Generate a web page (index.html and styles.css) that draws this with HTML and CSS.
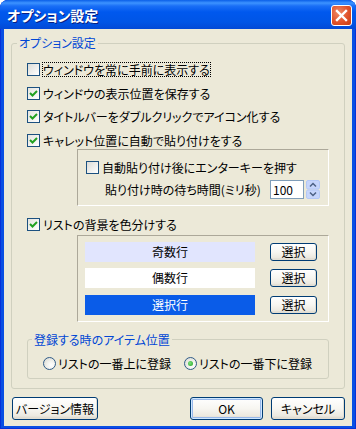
FILE: index.html
```html
<!DOCTYPE html>
<html lang="ja">
<head>
<meta charset="UTF-8">
<title>オプション設定</title>
<link rel="stylesheet" href="styles.css">
</head>
<body>

<div class="window">
    <div class="titlebar">
        <span class="title">オプション設定</span>
        <span class="close">
            <svg width="21" height="21" viewBox="0 0 21 21"><path d="M6 6 L15 15 M15 6 L6 15" stroke="#fff" stroke-width="2.4" stroke-linecap="square"/></svg>
        </span>
    </div>

    <div class="client">
        <fieldset class="group main">
            <legend>オプション設定</legend>
            <div class="group-body main-body">

                <div class="checks">
                    <label class="check"><span class="box"></span><span class="text focus">ウィンドウを常に手前に表示する</span></label>
                    <label class="check"><span class="box on"><svg width="11" height="11" viewBox="0 0 11 11"><path d="M2 5 L4.5 7.5 L9 3" fill="none" stroke="#21a121" stroke-width="2"/></svg></span><span class="text">ウィンドウの表示位置を保存する</span></label>
                    <label class="check"><span class="box on"><svg width="11" height="11" viewBox="0 0 11 11"><path d="M2 5 L4.5 7.5 L9 3" fill="none" stroke="#21a121" stroke-width="2"/></svg></span><span class="text">タイトルバーをダブルクリックでアイコン化する</span></label>
                    <label class="check"><span class="box on"><svg width="11" height="11" viewBox="0 0 11 11"><path d="M2 5 L4.5 7.5 L9 3" fill="none" stroke="#21a121" stroke-width="2"/></svg></span><span class="text">キャレット位置に自動で貼り付けをする</span></label>
                </div>

                <div class="panel paste">
                    <label class="check"><span class="box"></span><span class="text">自動貼り付け後にエンターキーを押す</span></label>
                    <div class="wait">
                        <span class="wait-label">貼り付け時の待ち時間(ミリ秒)</span>
                        <span class="num">100</span>
                        <span class="spin">
                            <svg width="14" height="19" viewBox="0 0 14 19">
                                <rect x="0.5" y="0.5" width="13" height="8.5" rx="1.5" fill="#c6d5fb" stroke="#b4c8f6"/>
                                <rect x="0.5" y="10" width="13" height="8.5" rx="1.5" fill="#c6d5fb" stroke="#b4c8f6"/>
                                <path d="M4 6.5 L7 3.5 L10 6.5" fill="none" stroke="#4d6185" stroke-width="1.5"/>
                                <path d="M4 12.5 L7 15.5 L10 12.5" fill="none" stroke="#4d6185" stroke-width="1.5"/>
                            </svg>
                        </span>
                    </div>
                </div>

                <label class="check list-check"><span class="box on"><svg width="11" height="11" viewBox="0 0 11 11"><path d="M2 5 L4.5 7.5 L9 3" fill="none" stroke="#21a121" stroke-width="2"/></svg></span><span class="text">リストの背景を色分けする</span></label>

                <div class="panel colors">
                    <div class="color-row"><span class="swatch odd">奇数行</span><button class="btn small">選択</button></div>
                    <div class="color-row"><span class="swatch even">偶数行</span><button class="btn small">選択</button></div>
                    <div class="color-row"><span class="swatch sel">選択行</span><button class="btn small">選択</button></div>
                </div>

                <fieldset class="group pos">
                    <legend>登録する時のアイテム位置</legend>
                    <div class="group-body radios">
                        <label class="radio first"><span class="dot"></span><span class="text">リストの一番上に登録</span></label>
                        <label class="radio"><span class="dot on"></span><span class="text">リストの一番下に登録</span></label>
                    </div>
                </fieldset>

            </div>
        </fieldset>

        <div class="buttons">
            <button class="btn version">バージョン情報</button>
            <button class="btn ok">OK</button>
            <button class="btn cancel">キャンセル</button>
        </div>
    </div>
</div>

</body>
</html>
```

FILE: styles.css
```css
body {
    margin: 0;
    background-color: #fff;
    font-family: "Noto Sans CJK JP", "Noto Sans", sans-serif;
    font-size: 12px;
    font-feature-settings: "palt";
}

.window {
    width: 356px;
    height: 429px;
    display: flex;
    flex-direction: column;
    background-color: #0a4fe3;
    border-radius: 8px 8px 0 0;
    box-shadow: inset 0 0 0 1px #0831d9;
}

.titlebar {
    height: 29px;
    flex-shrink: 0;
    display: flex;
    align-items: center;
    padding: 0 4px 0 7px;
    border-radius: 8px 8px 0 0;
    background: linear-gradient(#0a5fe8 0, #3d93ff 3px, #1a6ff6 6px, #0058ee 12px, #0055e6 22px, #0249d6 29px);
}

.title {
    flex: 1;
    color: #fff;
    font-size: 14px;
    font-weight: bold;
    text-shadow: 1px 1px 0 #0a1e7f;
    padding-top: 1px;
}

.close {
    width: 21px;
    height: 21px;
    box-sizing: border-box;
    border: 1px solid #fff;
    border-radius: 3px;
    background: radial-gradient(circle at 35% 35%, #ef8a66, #e0522b 55%, #c53c12);
    display: flex;
    align-items: center;
    justify-content: center;
    margin-top: 1px;
}

.close svg {
    margin: -1px;
}

.client {
    flex: 1;
    margin: 0 4px 3px 4px;
    background-color: #ece9d8;
    display: flex;
    flex-direction: column;
}

.group {
    margin: 0;
    padding: 0;
    border: 1px solid #d0d0bf;
    border-radius: 3px;
    min-width: 0;
}

.group legend {
    color: #0046d5;
    line-height: 14px;
    padding: 0 2px;
}

.main {
    margin: 7px 7px 0 7px;
}

.main legend {
    margin-left: 5px;
}

.main-body {
    padding: 13px 15px 9px 15px;
}

.checks {
    display: flex;
    flex-direction: column;
    gap: 10.5px;
}

.check {
    display: flex;
    align-items: center;
    height: 13px;
    line-height: 13px;
    white-space: nowrap;
}

.box {
    width: 13px;
    height: 13px;
    box-sizing: border-box;
    border: 1px solid #1c5180;
    background: linear-gradient(135deg, #dcdcd7, #ffffff);
    display: flex;
    align-items: center;
    justify-content: center;
    flex-shrink: 0;
}

.box.on {
    background: linear-gradient(135deg, #e4e4df, #ffffff);
}

.check .text {
    margin-left: 3px;
}

.check .focus {
    margin-left: 2px;
    padding: 1px 1px 1px 1px;
    line-height: 13px;
    outline: 1px dotted #000;
    outline-offset: -1px;
}

.panel {
    margin-left: 50px;
    border: 1px solid;
    border-color: #aca899 #fff #fff #aca899;
}

.paste {
    margin-top: 2px;
    padding: 11px 8px 6px 8px;
}

.wait {
    display: flex;
    align-items: center;
    margin-top: 6px;
    padding-left: 19px;
}

.wait-label {
    flex: 1;
}

.num {
    width: 34px;
    height: 19px;
    box-sizing: border-box;
    border: 1px solid #7f9db9;
    background-color: #fff;
    padding-left: 2px;
    line-height: 17px;
}

.spin {
    width: 14px;
    height: 19px;
    margin-left: 2px;
}

.list-check {
    margin-top: 12px;
}

.colors {
    margin-top: 4px;
    padding: 6px 7px 6px 7px;
    display: flex;
    flex-direction: column;
    gap: 6.5px;
}

.color-row {
    display: flex;
    align-items: center;
}

.swatch {
    width: 170px;
    height: 20px;
    line-height: 20px;
    text-align: center;
}

.odd {
    background-color: #e1e5fe;
}

.even {
    background-color: #fff;
}

.sel {
    background-color: #0a5ce8;
    color: #fff;
}

.btn {
    font-family: inherit;
    font-size: 12px;
    font-feature-settings: "palt";
    color: #000;
    border: 1px solid #003c74;
    border-radius: 3px;
    background: linear-gradient(#ffffff 0%, #f7f6f1 50%, #ece9e0 85%, #d8d2c6 100%);
    box-shadow: inset -1px -1px 0 #e2ded3;
    padding: 0;
    height: 23px;
}

.small {
    width: 47px;
    height: 18px;
    margin-left: 15px;
    line-height: 16px;
}

.pos {
    margin-top: 11px;
}

.pos legend {
    margin-left: 4px;
}

.radios {
    display: flex;
    padding: 10px 15px 8px 15px;
}

.radio {
    display: flex;
    align-items: center;
    height: 13px;
    line-height: 13px;
    white-space: nowrap;
}

.radio.first {
    width: 141px;
}

.radio .text {
    margin-left: 2px;
}

.dot {
    width: 13px;
    height: 13px;
    box-sizing: border-box;
    border: 1px solid #2f5b88;
    border-radius: 50%;
    background: radial-gradient(circle at 65% 65%, #ffffff 0, #f4f4f0 35%, #d6d6cc 100%);
    display: flex;
    align-items: center;
    justify-content: center;
    flex-shrink: 0;
}

.dot.on::after {
    content: "";
    width: 5px;
    height: 5px;
    border-radius: 50%;
    background: radial-gradient(circle at 40% 40%, #7de27d, #21a121);
}

.buttons {
    display: flex;
    margin-top: 8px;
    padding: 0 7px 0 8px;
}

.version {
    width: 86px;
}

.ok {
    width: 73px;
    margin-left: auto;
    box-shadow: inset 0 0 0 1px #cee7ff, inset 0 0 0 2px #98b8ea;
}

.cancel {
    width: 74px;
    margin-left: 8px;
}
```
